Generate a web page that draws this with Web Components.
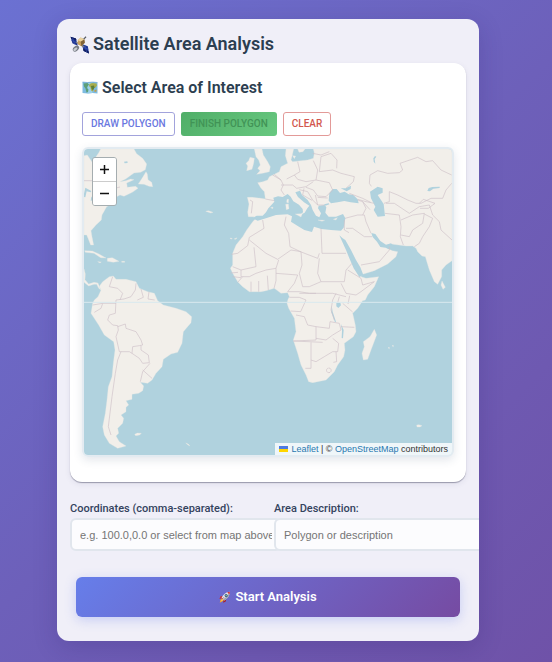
<!DOCTYPE html>
<html lang="en">
<head>
<meta charset="utf-8">
<meta name="viewport" content="width=device-width, initial-scale=1">
<title>Satellite Area Analysis</title>
<style>
html { min-height: 100%; background: linear-gradient(135deg, #6b71d2 0%, #6d60ba 50%, #6f52a8 100%); }
body { margin: 0; padding: 19px 73px 20px 57px; font-family: Roboto, "Liberation Sans", sans-serif; color: #2c3e50; }
</style>
</head>
<body>
<analysis-panel>
  <emoji-icon slot="icon" name="satellite"></emoji-icon>
  <span slot="title">Satellite Area Analysis</span>
  <area-picker>
    <emoji-icon slot="icon" name="map"></emoji-icon>
    <span slot="title">Select Area of Interest</span>
    <tool-button slot="tools" kind="primary">DRAW POLYGON</tool-button>
    <tool-button slot="tools" kind="success" disabled>FINISH POLYGON</tool-button>
    <tool-button slot="tools" kind="danger">CLEAR</tool-button>
    <world-map></world-map>
  </area-picker>
  <field-row>
    <text-field label="Coordinates (comma-separated):" placeholder="e.g. 100.0,0.0 or select from map above"></text-field>
    <text-field label="Area Description:" placeholder="Polygon or description"></text-field>
  </field-row>
  <start-button><emoji-icon slot="icon" name="rocket"></emoji-icon>Start Analysis</start-button>
</analysis-panel>

<script>
const define = (name, html, setup) => {
  const template = document.createElement('template');
  template.innerHTML = html;
  customElements.define(name, class extends HTMLElement {
    constructor() {
      super();
      this.attachShadow({ mode: 'open' }).append(template.content.cloneNode(true));
    }
    connectedCallback() { if (setup) setup(this, this.shadowRoot); }
  });
};

const icons = {
  satellite: `
    <path d="M1 3l9 3 3 12-9-4z" fill="#1a2f8c"/><path d="M1 3l9 3 1 3-9-3z" fill="#0f1c5c"/>
    <path d="M4 4l4 12M2 9l10 4" stroke="#3c57b8" stroke-width="1"/>
    <path d="M20 15l10 4 2 12-9-4z" fill="#1b3596"/><path d="M22 23l9 4 1 4-9-4z" fill="#0f1c5c"/>
    <path d="M25 17l3 12M21 20l10 4" stroke="#3c57b8" stroke-width="1"/>
    <path d="M10 12l14 8" stroke="#777b84" stroke-width="2"/>
    <path d="M13 9l5-5 6 3 1 6-6 6-6-4z" fill="#c9a05f"/><path d="M18 11l6-4 1 6-6 6z" fill="#80643b"/>
    <path d="M13 9l5-5 6 3-6 4z" fill="#ead3a0"/>
    <ellipse cx="10" cy="23" rx="6" ry="4" fill="#767b84" transform="rotate(-40 10 23)"/>
    <ellipse cx="9" cy="24" rx="4" ry="2" fill="#c9ccd2" transform="rotate(-40 9 24)"/>
    <path d="M23 7l4-4" stroke="#55585f" stroke-width="2"/>`,
  map: `
    <path d="M1 4l10 1 10-1 10 1v22l-10-1-10 1-10-1z" fill="#7dbbe0"/>
    <path d="M11 5l10-1v22l-10 1z" fill="#9bd0ea"/>
    <path d="M3 7l8-1 3 3-3 4-1 3 3 3-1 5-3 1-2-8-3-4z" fill="#5d9f78"/>
    <path d="M15 8l5-2 9 1 1 4-4 5-3-2-1 9-4-2-1-6-3-3z" fill="#a8ad4c"/>
    <path d="M18 12l6-1 1 4-3 6-3-4z" fill="#5d7e38"/><path d="M25 20l4-1v4l-4 1z" fill="#c19d48"/>
    <path d="M1 4l10 1 10-1 10 1" fill="none" stroke="#4d8fc2" stroke-width="1"/>`,
  rocket: `
    <path d="M10 13L4 14l-3 7 7-1z" fill="#c92f36"/><path d="M19 22l-1 6-7 3 1-7z" fill="#a82029"/>
    <path d="M8 19l5 5-4 3-7 4 2-8z" fill="#f7a72c"/><path d="M8 21l3 3-5 3z" fill="#ffe16b"/>
    <path d="M7 18C11 9 18 3 29 2c0 11-7 18-15 23z" fill="#dfe5ec"/>
    <path d="M29 2c0 11-7 18-15 23l-3-3C19 17 25 10 29 2z" fill="#9aa5b1"/>
    <path d="M22 3l7-1-1 7c-2-1-5-4-6-6z" fill="#d8343b"/>
    <circle cx="19" cy="12" r="4" fill="#48535f"/><circle cx="19" cy="12" r="2" fill="#62c5e8"/>
    <path d="M8 22l5-5" stroke="#a82029" stroke-width="2"/>`
};
define('emoji-icon', `
  <style>
    :host { display: inline-block; width: 1em; height: 1em; flex: none; }
    svg { display: block; width: 100%; height: 100%; overflow: visible; }
  </style><svg viewBox="0 0 32 32" aria-hidden="true"></svg>`,
  (el, root) => { root.querySelector('svg').innerHTML = icons[el.getAttribute('name')]; });

define('analysis-panel', `
  <style>
    :host { display: block; overflow: hidden; padding: 13px 13px 24px; border-radius: 12px; box-sizing: border-box;
      background: #f0eff8; box-shadow: 0 6px 24px rgba(40, 25, 100, .2); }
    h1 { display: flex; align-items: center; gap: 4px; margin: 0 0 7px; font-size: 18px; line-height: 24px; font-weight: 600; }
    ::slotted(emoji-icon) { font-size: 19px; }
  </style>
  <h1><slot name="icon"></slot><slot name="title"></slot></h1>
  <slot></slot>`);

define('area-picker', `
  <style>
    :host { display: block; padding: 12px 12px 25px; border-radius: 12px; background: #fff;
      box-shadow: 0 1px 1px rgba(40, 40, 70, .4), 0 2px 6px rgba(40, 40, 90, .08); }
    h2 { display: flex; align-items: center; gap: 4px; margin: 0 0 12px; font-size: 16px; line-height: 25px; font-weight: 600; }
    ::slotted(emoji-icon) { font-size: 16px; }
    .tools { display: flex; flex-wrap: wrap; gap: 6px; margin-bottom: 11px; }
  </style>
  <h2><slot name="icon"></slot><slot name="title"></slot></h2>
  <div class="tools"><slot name="tools"></slot></div>
  <slot></slot>`);

define('tool-button', `
  <style>
    :host { display: block; }
    button { display: block; height: 24px; padding: 0 8px; border: 1px solid; border-radius: 3px; background: #fff;
      font: 500 10px/22px Roboto, sans-serif; white-space: nowrap; }
    :host([kind=primary]) button { color: #6a78e0; border-color: #a2a3dc; }
    :host([kind=danger]) button { color: #d2574e; border-color: #e39a98; }
    :host([kind=success]) button { color: #419356; border-color: transparent; background: linear-gradient(135deg, #50ae68, #68c880) border-box; }
  </style>
  <button type="button"><slot></slot></button>`,
  (el, root) => { root.querySelector('button').disabled = el.hasAttribute('disabled'); });

define('world-map', `
  <style>
    :host { display: block; position: relative; overflow: hidden; border: 2px solid #e3ebf1; border-radius: 6px;
      box-shadow: 0 3px 10px rgba(40, 60, 100, .13); }
    .world { display: block; width: 100%; height: auto; background: #b0d2de; }
    .land { fill: #f2efea; stroke: #e4e6e4; stroke-width: 1; stroke-linejoin: round; }
    .water { fill: #b0d2de; }
    .lines { fill: none; stroke: #cfc1c8; stroke-width: 2; stroke-linejoin: round; }
    .zoom { position: absolute; left: 8px; top: 8px; border: 1px solid #a5adb0; border-radius: 3px; overflow: hidden; }
    .zoom button { display: block; width: 23px; height: 23px; padding: 0; border: 0; background: #fff; }
    .zoom button + button { height: 24px; border-top: 1px solid #ccc; }
    .zoom svg { display: block; margin: auto; }
    .credit { position: absolute; right: 0; bottom: 0; display: flex; align-items: center; gap: 3px; padding: 0 4px;
      background: rgba(255, 255, 255, .8); color: #333; font: 9px/12px "Liberation Sans", sans-serif; white-space: nowrap; }
    a { color: #2878b0; text-decoration: none; }
  </style>
  <svg class="world" viewBox="0 0 1104 918" role="img" aria-label="World map">
    <g class="land">
      <path d="M0 20L10 18 28 45 35 25 45 10 50 0H150L158 14 176 28 188 45 184 62 170 70 150 72 125 90 108 98 125 95 140 90 150 92 128 102 130 115 155 112 162 118 145 130 120 142 108 138 98 143 88 163 68 173 54 198 52 213 36 228 21 245 24 263 29 288 20 288 12 268 8 258 0 258z"/>
      <path d="M186 68L176 85 163 105 180 106 195 112 206 113 203 100 192 92 190 75z"/>
      <path d="M2 305L25 306 45 315 66 327 50 326 30 313 4 310zM70 328L85 326 105 337 88 340 70 337zM41 338l11 1-4 3zM113 337h9v3h-9z"/>
      <path d="M0 360L4 375 3 392 14 405 30 400 42 402 46 412 51 423 44 418 38 406 30 406 14 411 0 400z"/>
      <path d="M76 383L88 381 96 391 126 391 156 398 166 418 191 428 211 433 221 455 238 468 276 478 306 488 323 503 321 521 298 548 294 583 281 610 261 615 238 631 234 653 216 673 204 693 191 703 169 700 179 711 176 725 164 733 144 736 144 751 126 755 134 768 126 775 126 788 111 798 119 808 116 823 101 838 104 853 96 861 106 878 126 891 101 898 76 883 61 858 56 833 64 793 69 753 73 713 84 683 88 643 93 603 89 578 61 558 44 528 21 493 26 463 31 453 42 443 51 423 46 412 56 398z"/>
      <path d="M152 856l8-4 12 1-5 5-12 2zM305 882l8 3 5 6-6-3zM998 828l7-1 9 3-6 4-9 0zM365 187l8-2 14 5-7 2zM438 267l7 1-4 3zM450 270l9-4-3 5zM912 596l4-1v4zM924 590l4-1v4z"/>
      <path d="M511 0L534 0 538 18 551 38 559 53 556 68 536 73 518 76 528 65 521 58 529 48 524 33 516 23zM498 25L511 28 509 43 504 61 488 65 491 51 486 43 494 35z"/>
      <path d="M1104 0V335L1086 348 1073 363 1073 383 1061 406 1051 398 1036 363 1024 323 1014 321 1001 308 996 298 986 291 966 291 921 285 911 298 925 305 941 308 936 323 911 345 871 365 836 376 831 383 846 388 884 383 871 413 851 438 844 453 836 455 821 478 806 493 814 528 816 548 808 563 781 583 783 603 779 623 761 648 751 668 726 693 686 701 674 698 666 678 651 648 641 613 628 573 636 548 631 508 614 478 609 463 612 451 616 443 611 431 591 433 571 418 546 425 531 428 496 428 476 413 461 398 446 373 439 358 446 348 446 313 456 288 476 263 488 243 506 218 513 211 509 203 493 203 491 190 495 165 490 145 506 145 531 148 544 150 541 128 531 118 521 101 536 98 551 93 556 83 571 76 586 68 591 53 611 43 604 20 606 0 629 0 625 18 621 33 626 38 651 35 671 33 688 28 691 13 688 0z"/>
      <path d="M641 0h22l-6 8-12 2zM626 20l9 1-4 8z"/>
      <path d="M871 541L878 558 861 603 851 631 838 633 834 613 841 593 838 578 858 563zM1074 396L1084 415 1077 421 1071 408z"/>
    </g>
    <g class="water">
      <path d="M507 209L511 204 518 200 536 200 546 190 553 178 571 158 568 146 582 142 596 144 611 135 620 143 628 157 645 167 656 180 657 190 648 198 662 191 670 178 676 170 660 160 642 144 634 130 648 125 654 138 671 153 681 168 686 183 696 200 706 205 711 193 702 178 704 170 722 168 727 175 724 191 734 203 756 203 777 195 784 208 779 236 771 245 741 243 712 240 690 233 684 249 661 243 640 230 621 218 624 202 611 196 576 198 541 209 521 215z"/>
      <path d="M736 133L746 120 758 120 768 132 782 128 794 136 808 138 821 151 824 163 800 160 781 156 761 160 741 163 734 155zM770 118L785 118 801 110 800 120 788 127zM720 166l14-3 2 3-12 4z"/>
      <path d="M858 128L881 113 896 118 896 131 881 138 891 153 899 165 903 201 881 203 869 183 874 173 861 148z"/>
      <path d="M766 259L776 268 784 273 801 303 816 333 829 355 838 378 826 384 809 358 797 330 786 303z"/>
      <path d="M862 252L874 255 889 276 906 287 921 283 935 297 925 302 911 299 905 296 889 294 879 278 866 264z"/>
      <path d="M757 462l12-1 2 8-8 8-6-5zM4 116l18 10-2 4-12-3-4 18-6-2zM22 143l10 2 0 8-12 2z"/>
      <path d="M1030 126l4-9 11-3 22-1v4l-19 2-10 8zM868 28l5-7 4 2-5 7 2 14-5-6zM120 38l10-1 1 5-9 1z"/>
      <path d="M743 470l3 18 10 30-3 2-11-30zM771 525l8 18-2 25-4-1 1-22z"/>
    </g>
    <g class="land">
      <path d="M605 166l8-1 2 14-8 3zM609 151l5 0-1 11-5-2zM634 195l21-1-4 10zM702 213l20 1-8 3zM748 211l12-5-4 7z"/>
      <path d="M560 176l7-2-1 5z"/>
    </g>
    <g class="lines">
      <path d="M26 95l22 25 35 0 25-6M83 120l2 25M0 95l26 0"/>
      <path d="M111 608L101 633 94 673 84 743 73 833 81 858M96 453L94 493 76 498 71 513 86 528 101 530 103 543 96 563 106 608 136 608 144 613 146 593 166 590 176 588 171 573 156 548 126 538 124 525 101 533M144 613L166 628 176 643 196 641 193 618 171 603 171 590M176 663L204 688M198 643L176 668 169 698M26 468L56 463 51 478 31 490M56 463L96 463M86 383L76 413 101 418 116 433 108 453M156 403L154 423 141 443 120 450 96 453M171 420L178 445 160 453M195 428l-3 22 20 3"/>
      <path d="M536 213L540 238 496 265 491 290 461 313 442 316M496 273L546 313 581 331 621 303 651 308M510 295L516 353 471 363 446 353M471 363V383L496 383 516 373 546 363 576 358 584 333M606 203L601 228 614 253 618 293 649 308 701 328 706 313M711 238L714 313H786M651 308L654 348 646 373 656 413M706 328L701 373 711 398H781L786 363 804 343M576 373L641 378 631 403 611 428M576 358V395L570 418M791 363L831 388 836 408 871 398 831 428 816 438 786 433 771 403M656 413H676L711 398M611 428H646L676 433 746 433 786 443M501 398V428M524 396V428M550 380l3 43M440 372l22-2M446 383l25 3M461 400l15-17"/>
      <path d="M636 498L661 503 671 528 696 533V573L628 576 716 580M696 533L736 538 738 518 766 523 771 543 746 558 726 573 696 568M756 433L746 453 741 483 751 513M776 463l30 26M771 533L811 535M681 580V633L696 638 721 623 746 608 761 608 764 583 746 568M681 633V658H664M756 608L758 638 748 640M734 657a7 7 0 1 0 1 0M616 445h30l20 8-16 35-30-2M646 433l30 0 20 0M766 443l-5 18M797 440l-5 25"/>
      <path d="M544 150L571 155M498 153L506 158 502 193M566 78L591 93 598 108 591 123 601 138M641 38L648 68 631 78 641 91 666 98 696 93 701 63 688 35M591 108L626 108 638 118 666 113 688 98M631 78l-23 12M696 93L736 101 746 123 726 143 701 141 688 123 666 115M646 122L671 128 686 153 701 168 694 138M660 118l-4 20 28 16M701 145l30 2M706 68L746 63 771 73 811 83 808 98 786 118M711 23L741 13 759 33 758 58M686 13L711 18 736 8M706 68l5-45M571 76l20 17M701 168l20 0"/>
      <path d="M862 112L856 103 858 78 881 65 911 73 946 71 956 63 948 43 1001 25 1026 38 1046 35 1071 63 1103 78M1103 103L1086 123 1076 148 1041 148 1011 163 996 163 971 153 941 138 916 128V158L900 163M906 163L931 163 976 193 1006 173 1036 168M903 193L946 198 951 233 949 263 958 288M951 213L986 198 1021 193 1016 223 986 243 976 263 951 258M1021 195L1046 208 1036 233 1016 263 1006 283 991 293M1036 168L1046 198 1066 218 1071 243 1104 273M1006 163l12-12 35 12-20 15-25 0M783 208L821 198 841 198 846 218 861 253M786 238L806 238 841 263 864 263M836 198L846 178 836 158 821 153M821 151L846 158 871 163M796 133L836 148 860 160M831 348L886 338 916 303V293M781 213l0 30 14 8M836 158l22 24"/>
    </g>
    <path d="M0 460H1104" stroke="#d9e9ee" stroke-width="3"/>
  </svg>
  <div class="zoom">
    <button type="button" aria-label="Zoom in"><svg width="11" height="11" viewBox="0 0 22 22"><path d="M2 11h18M11 2v18" stroke="#111" stroke-width="3"/></svg></button>
    <button type="button" aria-label="Zoom out"><svg width="11" height="11" viewBox="0 0 22 22"><path d="M2 11h18" stroke="#111" stroke-width="3"/></svg></button>
  </div>
  <div class="credit"><svg width="9" height="6" viewBox="0 0 9 6" aria-hidden="true"><path d="M0 0h9v3H0z" fill="#4c7be1"/><path d="M0 3h9v3H0z" fill="#ffd500"/></svg><span><a href="#leaflet">Leaflet</a> | © <a href="#osm">OpenStreetMap</a> contributors</span></div>`);

define('field-row', `
  <style>
    :host { display: grid; grid-template-columns: minmax(0, 1fr) minmax(0, 1fr); gap: 12px; margin-top: 20px; }
  </style><slot></slot>`);

define('text-field', `
  <style>
    :host { display: block; position: relative; }
    label { display: block; margin-bottom: 2px; font-size: 11px; line-height: 14px; font-weight: 500; color: #34435e; white-space: nowrap; }
    input { display: block; box-sizing: content-box; width: 100%; height: 29px; padding: 0 8px; border: 2px solid #e1e6ed;
      border-radius: 6px; background: #fcfcfe; font: 11px "Liberation Sans", sans-serif; color: #333; }
    input::placeholder { color: #757575; opacity: 1; }
  </style>
  <label for="field"></label><input id="field" type="text">`,
  (el, root) => {
    root.querySelector('label').textContent = el.getAttribute('label');
    root.querySelector('input').placeholder = el.getAttribute('placeholder');
  });

define('start-button', `
  <style>
    :host { display: block; margin: 26px 6px 0; }
    button { display: flex; align-items: center; justify-content: center; gap: 4px; width: 100%; height: 40px; padding: 0; border: 0;
      border-radius: 6px; background: linear-gradient(135deg, #667eea, #764ba2); color: #fff; font: 600 13px/20px Roboto, sans-serif;
      box-shadow: 0 3px 12px rgba(102, 126, 234, .3); }
    ::slotted(emoji-icon) { font-size: 12px; }
  </style>
  <button type="button"><slot name="icon"></slot><span><slot></slot></span></button>`);
</script>
</body>
</html>
